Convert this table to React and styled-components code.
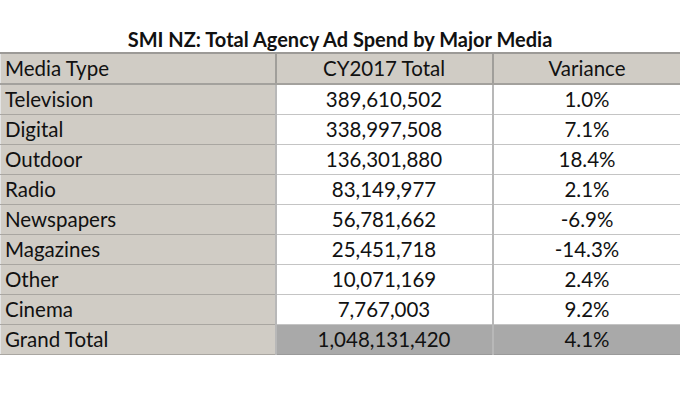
import React from 'react';
import styled, {createGlobalStyle} from 'styled-components';

const GlobalStyle = createGlobalStyle`
  html, body {
    margin: 0;
    padding: 0;
    background: #ffffff;
  }
  body {
    font-family: Lato, "Open Sans", sans-serif;
    color: #111111;
  }
`;

const Page = styled.div`
  width: 680px;
  height: 402px;
  overflow: hidden;
  background: #ffffff;
`;

const Title = styled.h1`
  margin: 0;
  padding-top: 26px;
  height: 26px;
  line-height: 26px;
  font-size: 20px;
  font-weight: 700;
  text-align: center;
  color: #111111;
`;

const Sheet = styled.table`
  width: 680px;
  border-collapse: collapse;
  table-layout: fixed;
  font-size: 20.5px;
`;

const Col = styled.col`
  width: ${p => p.w}px;
`;

const Cell = styled.td`
  height: 29px;
  padding: 0 4px;
  line-height: 29px;
  white-space: nowrap;
  text-align: ${p => (p.center ? 'center' : 'left')};
  background: ${p => p.bg || '#ffffff'};
  border-top: 1px solid ${p => p.line || '#c4c4c4'};
  border-bottom: 1px solid ${p => p.line || '#c4c4c4'};
  border-left: ${p => (p.first ? '1px solid #e4e4e4' : '2px solid #b8b8b8')};
`;

const HeadCell = styled(Cell).attrs({as: 'th'})`
  font-weight: 400;
  border-top: 2px solid #9c9a97;
  border-bottom: 2px solid #a3a19d;
  border-left: ${p => (p.first ? '1px solid #e4e4e4' : '2px solid #a09e9a')};
`;

const rows = [
    ['Television', '389,610,502', '1.0%'],
    ['Digital', '338,997,508', '7.1%'],
    ['Outdoor', '136,301,880', '18.4%'],
    ['Radio', '83,149,977', '2.1%'],
    ['Newspapers', '56,781,662', '-6.9%'],
    ['Magazines', '25,451,718', '-14.3%'],
    ['Other', '10,071,169', '2.4%'],
    ['Cinema', '7,767,003', '9.2%'],
];

const TAN = '#d0ccc5';
const DARK = '#a9a9a9';

export default function App() {
    return (
        <Page>
            <GlobalStyle/>
            <Title>SMI NZ: Total Agency Ad Spend by Major Media</Title>
            <Sheet>
                <colgroup>
                    <Col w={275}/>
                    <Col w={217}/>
                    <Col w={188}/>
                </colgroup>
                <thead>
                <tr>
                    <HeadCell first bg={TAN}>Media Type</HeadCell>
                    <HeadCell center bg={TAN}>CY2017 Total</HeadCell>
                    <HeadCell center bg={TAN}>Variance</HeadCell>
                </tr>
                </thead>
                <tbody>
                {rows.map(([name, total, variance]) => (
                    <tr key={name}>
                        <Cell first bg={TAN} line="#a9a6a1">{name}</Cell>
                        <Cell center>{total}</Cell>
                        <Cell center>{variance}</Cell>
                    </tr>
                ))}
                <tr>
                    <Cell first bg={TAN} line="#a9a6a1">Grand Total</Cell>
                    <Cell center bg={DARK} line="#9a9a9a">1,048,131,420</Cell>
                    <Cell center bg={DARK} line="#9a9a9a">4.1%</Cell>
                </tr>
                </tbody>
            </Sheet>
        </Page>
    );
}
